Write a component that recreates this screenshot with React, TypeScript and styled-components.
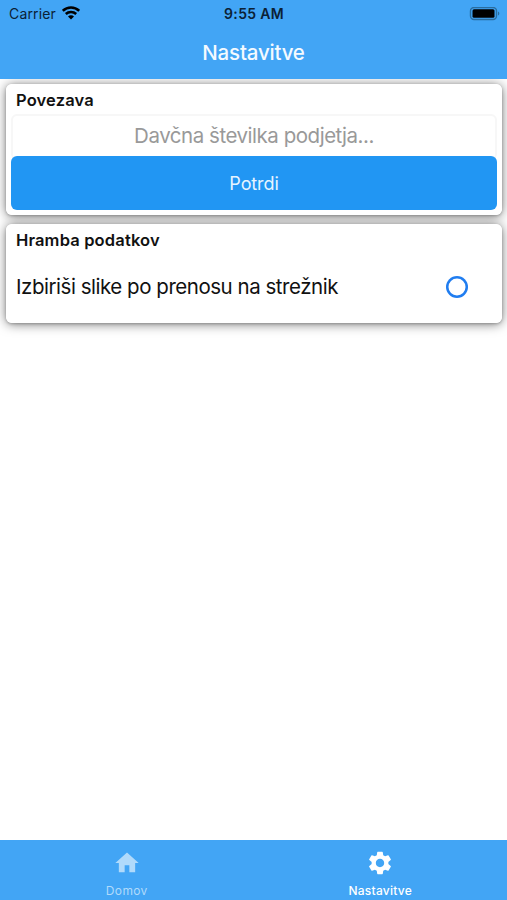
import React from "react";
import styled, { createGlobalStyle } from "styled-components";
import { MdHome, MdSettings } from "react-icons/md";

const GlobalStyle = createGlobalStyle`
  * { box-sizing: border-box; }
  html, body { margin: 0; padding: 0; background: #fff; }
  body { font-family: Inter, "Liberation Sans", sans-serif; color: #111; }
`;

const Screen = styled.div`
  width: 507px;
  height: 900px;
  display: flex;
  flex-direction: column;
  overflow: hidden;
  background: #fff;
`;

const Header = styled.header`
  height: 79px;
  flex: none;
  background: #42a5f5;
`;

const StatusBar = styled.div`
  height: 27px;
  padding: 0 7px 0 9px;
  display: grid;
  grid-template-columns: 1fr auto 1fr;
  align-items: center;
  color: #0b2135;
`;

const Carrier = styled.div`
  display: flex;
  align-items: center;
  gap: 6px;
  font-size: 14px;
  line-height: 27px;
  letter-spacing: 0.15px;
  svg { display: block; margin-top: -2px; }
`;

const Clock = styled.div`
  font-size: 14px;
  font-weight: 600;
  line-height: 27px;
  letter-spacing: 0.3px;
  margin-right: 1px;
`;

const Battery = styled.svg`
  display: block;
  justify-self: end;
`;

const Title = styled.h1`
  margin: 0;
  height: 52px;
  line-height: 51px;
  text-align: center;
  font-size: 20.5px;
  font-weight: 500;
  letter-spacing: -0.2px;
  color: #f4faff;
`;

const Content = styled.main`
  flex: 1;
  position: relative;
  z-index: 0;
  display: flex;
  flex-direction: column;
  gap: 9px;
  padding: 5px 5px 0 6px;
  overflow: hidden;
`;

const Card = styled.section<{ $height: number }>`
  position: relative;
  height: ${(p) => p.$height}px;
  padding: 5px;
  border-radius: 6px;
  background: #fff;

  /* The shadow sits below every card, so it never darkens a neighbour. */
  &::before {
    content: "";
    position: absolute;
    inset: 0;
    z-index: -1;
    border-radius: 6px;
    box-shadow: 0 1px 3px rgba(0, 0, 0, 0.22), 0 1px 12px rgba(0, 0, 0, 0.52);
  }
`;

const CardTitle = styled.h2`
  margin: 0 0 0 5px;
  height: 25px;
  line-height: 22px;
  font-size: 16.5px;
  font-weight: 600;
  letter-spacing: 0.15px;
`;

const TaxInput = styled.input`
  display: block;
  width: 100%;
  height: 46px;
  padding: 0 0 3px;
  border: 2px solid #f7f7f7;
  border-radius: 6px;
  background: #fff;
  text-align: center;
  font: 400 20.5px Inter, "Liberation Sans", sans-serif;
  letter-spacing: -0.47px;
  outline: none;
  &::placeholder { color: #999; opacity: 1; }
`;

const SubmitButton = styled.button`
  display: block;
  position: relative;
  width: 100%;
  height: 54px;
  margin-top: -4px;
  padding: 0;
  border: 0;
  border-radius: 6px;
  background: #2196f3;
  color: #e5f4ff;
  font: 400 18px Inter, "Liberation Sans", sans-serif;
  letter-spacing: -0.1px;
`;

const OptionRow = styled.label`
  display: flex;
  justify-content: space-between;
  align-items: center;
  height: 65px;
  padding: 0 29px 0 5px;
  font-size: 20.5px;
  letter-spacing: -0.47px;
`;

const Radio = styled.span`
  width: 22px;
  height: 22px;
  margin-top: 1px;
  box-shadow: inset 0 0 0 2.5px #207df0;
  border-radius: 50%;
`;

const TabBar = styled.nav`
  height: 60px;
  flex: none;
  display: grid;
  grid-template-columns: 1fr 1fr;
  background: #42a5f5;
`;

const Tab = styled.div<{ $active?: boolean }>`
  display: flex;
  flex-direction: column;
  align-items: center;
  padding-top: 9px;
  color: ${(p) => (p.$active ? "#fff" : "#b0dafb")};
  font-size: 12px;
  font-weight: ${(p) => (p.$active ? 500 : 400)};
  line-height: 16px;
  letter-spacing: ${(p) => (p.$active ? 0.25 : 0.35)}px;
  svg { display: block; margin-bottom: 6px; }
`;

export default function App() {
  return (
    <Screen>
      <GlobalStyle />
      <Header>
        <StatusBar>
          <Carrier>
            <span>Carrier</span>
            <svg width="18" height="14" viewBox="0 0 18 14" fill="none" stroke="#000" strokeWidth="2.5">
              <path d="M.8 4.8C5.4.3 12.6.3 17.2 4.8M3.8 8c2.9-2.8 7.5-2.8 10.4 0" />
              <path d="M6 10.4c1.6-1.5 4.4-1.5 6 0l-3 3z" fill="#000" stroke="none" />
            </svg>
          </Carrier>
          <Clock>9:55 AM</Clock>
          <Battery width="31" height="14" viewBox="0 0 31 14">
            <rect x="1.5" y="0.5" width="26" height="12" rx="3.5" fill="none" stroke="#2a6d9f" strokeWidth="1.4" />
            <rect x="3.5" y="2.2" width="22" height="8.5" rx="1.5" fill="#000" />
            <path d="M29 4.5v4c1.8-.7 1.8-3.3 0-4" fill="#2a6d9f" />
          </Battery>
        </StatusBar>
        <Title>Nastavitve</Title>
      </Header>
      <Content>
        <Card $height={131}>
          <CardTitle>Povezava</CardTitle>
          <TaxInput placeholder="Davčna številka podjetja..." />
          <SubmitButton>Potrdi</SubmitButton>
        </Card>
        <Card $height={99}>
          <CardTitle>Hramba podatkov</CardTitle>
          <OptionRow>
            <span>Izbiriši slike po prenosu na strežnik</span>
            <Radio />
          </OptionRow>
        </Card>
      </Content>
      <TabBar>
        <Tab>
          <MdHome size={28} />
          <span>Domov</span>
        </Tab>
        <Tab $active>
          <MdSettings size={28} />
          <span>Nastavitve</span>
        </Tab>
      </TabBar>
    </Screen>
  );
}
